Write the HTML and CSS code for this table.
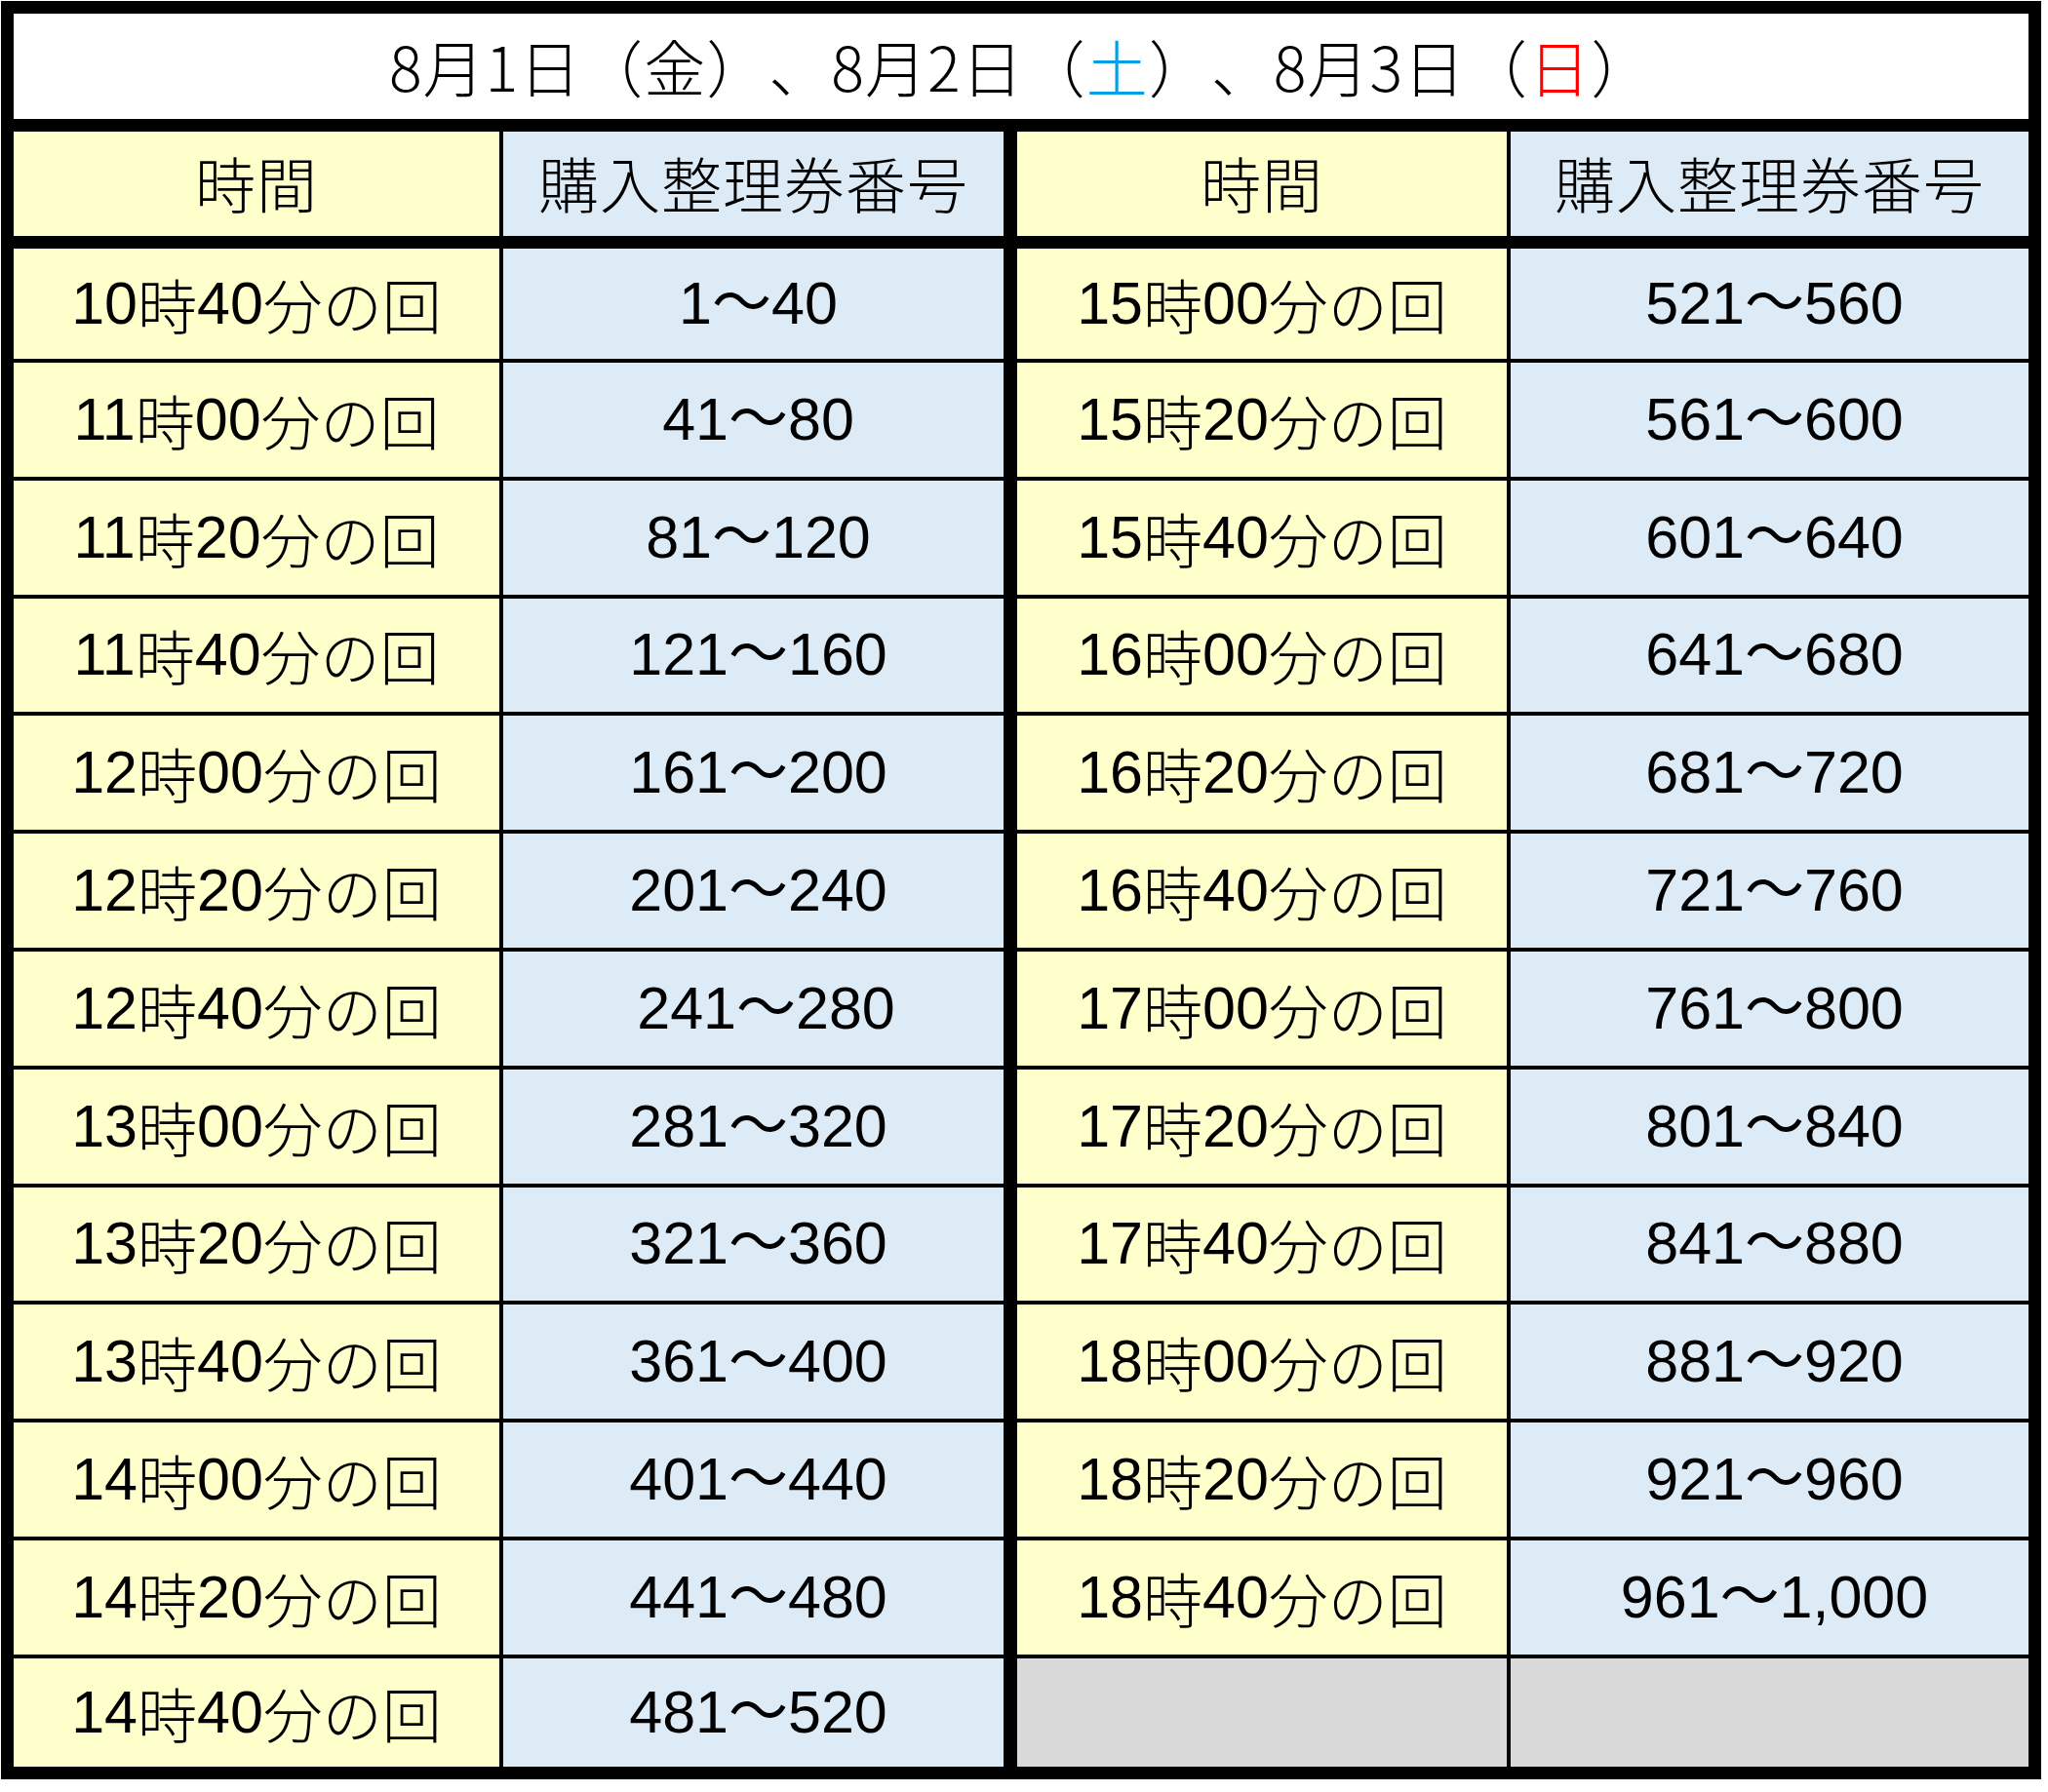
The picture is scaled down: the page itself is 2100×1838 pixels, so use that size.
FILE: index.html
```html
<!DOCTYPE html>
<html lang="ja">
<head>
<meta charset="utf-8">
<title>購入整理券番号</title>
<link rel="stylesheet" href="styles.css">
</head>
<body>
<div class="sheet">
  <div class="title">8月1日（金）、8月2日（<span class="sat">土</span>）、8月3日（<span class="sun">日</span>）</div>
  <div class="grid head">
    <div class="cell time">時間</div>
    <div class="cell range">購入整理券番号</div>
    <div class="cell time right">時間</div>
    <div class="cell range">購入整理券番号</div>
  </div>
  <div class="grid body">
    <div class="cell time"><span class="n">10</span>時<span class="n">40</span>分の回</div>
    <div class="cell range">1～40</div>
    <div class="cell time right"><span class="n">15</span>時<span class="n">00</span>分の回</div>
    <div class="cell range">521～560</div>

    <div class="cell time"><span class="n">11</span>時<span class="n">00</span>分の回</div>
    <div class="cell range">41～80</div>
    <div class="cell time right"><span class="n">15</span>時<span class="n">20</span>分の回</div>
    <div class="cell range">561～600</div>

    <div class="cell time"><span class="n">11</span>時<span class="n">20</span>分の回</div>
    <div class="cell range">81～120</div>
    <div class="cell time right"><span class="n">15</span>時<span class="n">40</span>分の回</div>
    <div class="cell range">601～640</div>

    <div class="cell time"><span class="n">11</span>時<span class="n">40</span>分の回</div>
    <div class="cell range">121～160</div>
    <div class="cell time right"><span class="n">16</span>時<span class="n">00</span>分の回</div>
    <div class="cell range">641～680</div>

    <div class="cell time"><span class="n">12</span>時<span class="n">00</span>分の回</div>
    <div class="cell range">161～200</div>
    <div class="cell time right"><span class="n">16</span>時<span class="n">20</span>分の回</div>
    <div class="cell range">681～720</div>

    <div class="cell time"><span class="n">12</span>時<span class="n">20</span>分の回</div>
    <div class="cell range">201～240</div>
    <div class="cell time right"><span class="n">16</span>時<span class="n">40</span>分の回</div>
    <div class="cell range">721～760</div>

    <div class="cell time"><span class="n">12</span>時<span class="n">40</span>分の回</div>
    <div class="cell range shift">241～280</div>
    <div class="cell time right"><span class="n">17</span>時<span class="n">00</span>分の回</div>
    <div class="cell range">761～800</div>

    <div class="cell time"><span class="n">13</span>時<span class="n">00</span>分の回</div>
    <div class="cell range">281～320</div>
    <div class="cell time right"><span class="n">17</span>時<span class="n">20</span>分の回</div>
    <div class="cell range">801～840</div>

    <div class="cell time"><span class="n">13</span>時<span class="n">20</span>分の回</div>
    <div class="cell range">321～360</div>
    <div class="cell time right"><span class="n">17</span>時<span class="n">40</span>分の回</div>
    <div class="cell range">841～880</div>

    <div class="cell time"><span class="n">13</span>時<span class="n">40</span>分の回</div>
    <div class="cell range">361～400</div>
    <div class="cell time right"><span class="n">18</span>時<span class="n">00</span>分の回</div>
    <div class="cell range">881～920</div>

    <div class="cell time"><span class="n">14</span>時<span class="n">00</span>分の回</div>
    <div class="cell range">401～440</div>
    <div class="cell time right"><span class="n">18</span>時<span class="n">20</span>分の回</div>
    <div class="cell range">921～960</div>

    <div class="cell time"><span class="n">14</span>時<span class="n">20</span>分の回</div>
    <div class="cell range">441～480</div>
    <div class="cell time right"><span class="n">18</span>時<span class="n">40</span>分の回</div>
    <div class="cell range">961～1,000</div>

    <div class="cell time"><span class="n">14</span>時<span class="n">40</span>分の回</div>
    <div class="cell range">481～520</div>
    <div class="cell empty right"></div>
    <div class="cell empty"></div>
  </div>
</div>
</body>
</html>
```

FILE: styles.css
```css
html, body {
  margin: 0;
  padding: 0;
  background: #ffffff;
}

body {
  font-family: "Noto Sans CJK JP", "Noto Sans", sans-serif;
  color: #000000;
  text-spacing-trim: space-all;
}

.sheet {
  box-sizing: border-box;
  width: 2092px;
  margin: 1px 0 0 1px;
  border: 13px solid #000000;
  background: #000000;
  display: flex;
  flex-direction: column;
  gap: 13px;
}

.title {
  height: 108px;
  background: #ffffff;
  display: flex;
  align-items: center;
  justify-content: center;
  padding-bottom: 4px;
  box-sizing: border-box;
  font-size: 63px;
  font-weight: 300;
  letter-spacing: 1px;
  line-height: 1;
  text-spacing-trim: space-all;
}

.sat { color: #00a0e9; }
.sun { color: #ff0000; }

.grid {
  display: grid;
  grid-template-columns: 498px 513px 512px 531px;
  column-gap: 4px;
}

.head {
  height: 107px;
}

.body {
  height: 1557px;
  row-gap: 4px;
  grid-template-rows: 113px repeat(11, 116.8px) 111px;
}

.cell {
  display: flex;
  align-items: center;
  justify-content: center;
  line-height: 1;
}

.right {
  margin-left: 10px;
}

.time {
  background: #ffffcc;
}

.range {
  background: #ddebf7;
}

.empty {
  background: #d9d9d9;
}

.head .cell {
  font-size: 62px;
  font-weight: 300;
  letter-spacing: 1px;
  padding-bottom: 3px;
}

.body .time {
  font-size: 61px;
  font-weight: 300;
}

.body .time .n {
  font-family: "Liberation Sans", sans-serif;
  font-weight: 400;
}

.body .range {
  font-family: "Liberation Sans", "Noto Sans CJK JP", sans-serif;
  font-size: 61px;
  padding-left: 10px;
}

.body .range.shift {
  padding-left: 26px;
}
```
